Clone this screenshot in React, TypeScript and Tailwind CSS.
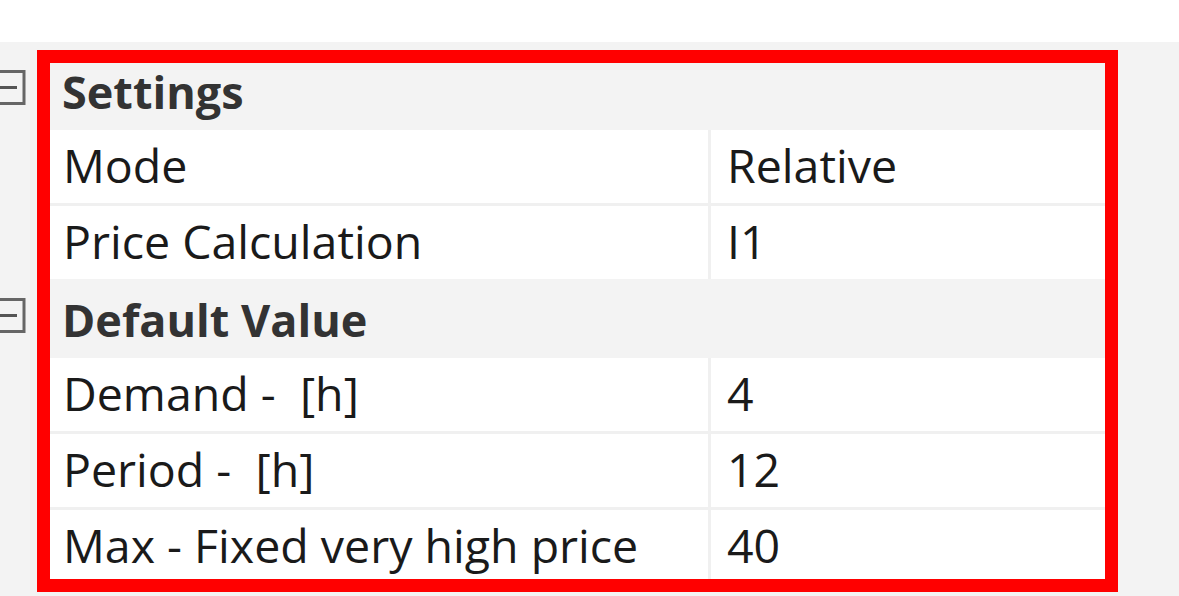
import React from "react";

type Row =
  | { kind: "cat"; label: string }
  | { kind: "prop"; name: string; value: string; last?: boolean };

const rows: Row[] = [
  { kind: "cat", label: "Settings" },
  { kind: "prop", name: "Mode", value: "Relative" },
  { kind: "prop", name: "Price Calculation", value: "I1", last: true },
  { kind: "cat", label: "Default Value" },
  { kind: "prop", name: "Demand -  [h]", value: "4" },
  { kind: "prop", name: "Period -  [h]", value: "12" },
  { kind: "prop", name: "Max - Fixed very high price", value: "40" },
];

function CollapseIcon() {
  return (
    <svg width="37" height="36" viewBox="0 0 37 36" className="block">
      <rect x="-10" y="1.5" width="34" height="32" fill="none" stroke="#666666" strokeWidth="3" />
      <line x1="0" y1="17.5" x2="17" y2="17.5" stroke="#555555" strokeWidth="3" />
    </svg>
  );
}

export default function App() {
  return (
    <div
      className="relative w-[1179px] h-[596px] overflow-hidden bg-white"
      style={{ fontFamily: '"Open Sans", "Noto Sans", "Liberation Sans", sans-serif' }}
    >
      <div className="h-[42px] bg-white" />
      <div className="h-[554px] bg-[#f3f3f3] pt-[12px]">
        <div className="flex flex-col w-[1110px]">
          {rows.map((r, i) =>
            r.kind === "cat" ? (
              <div key={i} className="flex h-[76px] bg-[#f3f3f3]">
                <div className="w-[37px] pt-[16px]">
                  <CollapseIcon />
                </div>
                <div className="flex items-center pl-[25px] pb-[2px] text-[45px] font-bold text-[#333] leading-none">
                  {r.label}
                </div>
              </div>
            ) : (
              <div key={i} className="flex h-[76px]">
                <div className="w-[37px] bg-[#f3f3f3]" />
                <div
                  className={`flex flex-1 border-b-[3px] ${
                    r.last ? "border-[#f3f3f3]" : "border-[#f0f0f0]"
                  } bg-white`}
                >
                  <div className="flex w-[674px] items-center border-r-[3px] border-[#f0f0f0] pl-[26px] pb-[2px] text-[46.5px] text-[#1a1a1a] leading-none whitespace-pre">
                    {r.name}
                  </div>
                  <div className="flex flex-1 items-center pl-[16px] pb-[2px] text-[46.5px] text-[#1a1a1a] leading-none">
                    {r.value}
                  </div>
                </div>
              </div>
            )
          )}
        </div>
      </div>
      <div className="absolute left-[37px] top-[50px] w-[1081px] h-[542px] border-[13px] border-[#ff0000] pointer-events-none" />
    </div>
  );
}
